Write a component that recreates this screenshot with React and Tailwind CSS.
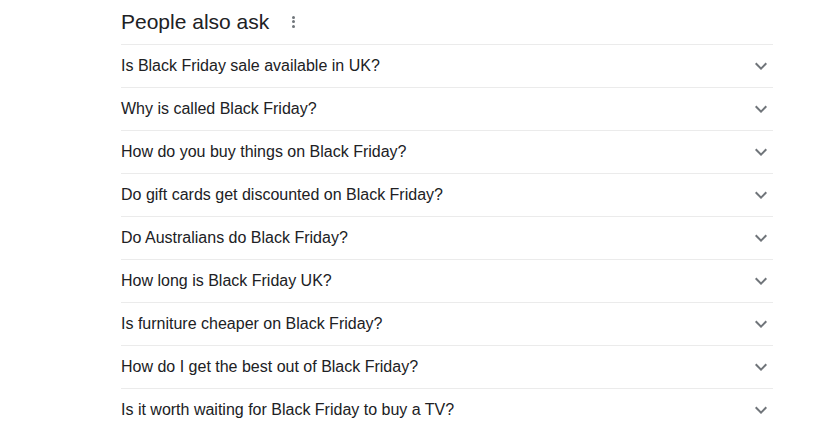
import React from "react";

const questions = [
  "Is Black Friday sale available in UK?",
  "Why is called Black Friday?",
  "How do you buy things on Black Friday?",
  "Do gift cards get discounted on Black Friday?",
  "Do Australians do Black Friday?",
  "How long is Black Friday UK?",
  "Is furniture cheaper on Black Friday?",
  "How do I get the best out of Black Friday?",
  "Is it worth waiting for Black Friday to buy a TV?",
];

function ExpandIcon() {
  return (
    <svg width="24" height="24" viewBox="0 0 24 24" className="fill-[#70757a]">
      <path d="M16.59 8.59L12 13.17 7.41 8.59 6 10l6 6 6-6z" />
    </svg>
  );
}

export default function App() {
  return (
    <div className="min-h-[430px] bg-white font-['Liberation_Sans',Arial,sans-serif]">
      <div className="ml-[121px] w-[652px]">
        {/* Heading */}
        <div className="flex h-[44px] items-center">
          <h2 className="text-[21px] leading-[28px] text-[#202124] pb-[1px]">
            People also ask
          </h2>
          <div className="ml-[23px] flex flex-col items-center gap-[1.5px] pb-[1px]">
            <span className="block h-[3px] w-[3px] rounded-full bg-[#70757a]" />
            <span className="block h-[3px] w-[3px] rounded-full bg-[#70757a]" />
            <span className="block h-[3px] w-[3px] rounded-full bg-[#70757a]" />
          </div>
        </div>

        {/* Questions */}
        <ul>
          {questions.map((q) => (
            <li
              key={q}
              className="flex h-[43px] items-center justify-between border-t border-[#ebebeb]"
            >
              <span className="text-[16px] leading-[22px] text-[#202124]">
                {q}
              </span>
              <ExpandIcon />
            </li>
          ))}
        </ul>
      </div>
    </div>
  );
}
